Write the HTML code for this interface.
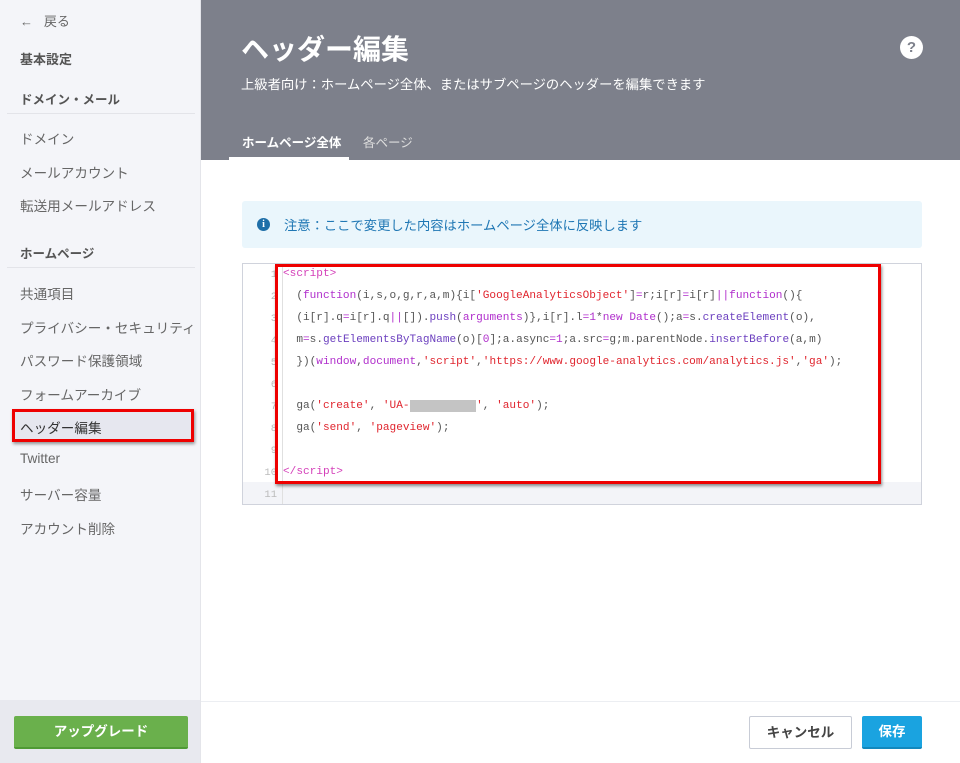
<!DOCTYPE html>
<html><head><meta charset="utf-8"><style>
*{margin:0;padding:0;box-sizing:border-box}
body{width:960px;height:763px;position:relative;overflow:hidden;font-family:"Liberation Sans","Noto Sans CJK JP",sans-serif;background:#fff}
.sb{position:absolute;left:0;top:0;width:201px;height:763px;background:#f4f5f9;border-right:1px solid #e4e5ea}
.sb div{position:absolute;left:20px;color:#666;font-size:13.6px;white-space:nowrap}
.sb .b{font-weight:bold;color:#555;font-size:12.5px}
.sb .hr{position:absolute;left:7px;width:188px;height:1px;background:#e3e4e9}
.hd{position:absolute;left:201px;top:0;width:759px;height:160px;background:#7d808b;color:#fff}
.code{position:absolute;left:242px;top:263px;width:680px;height:242px;border:1px solid #d0d3dc;background:#fff;font-family:"Liberation Mono",monospace;font-size:11.1px}
.ln{position:absolute;left:0;width:34px;text-align:right;color:#bbb;font-size:10.5px}
.cl{position:absolute;left:40px;white-space:pre;color:#555}
.k{color:#b02ecc}.s{color:#e0252e}.f{color:#6b3fbf}.t{color:#d43fb9}
</style></head><body>
<div class="sb">
<div style="top:11px;font-size:13px">←&nbsp;&nbsp;&nbsp;戻る</div>
<div class="b" style="top:49px;font-size:13px">基本設定</div>
<div class="b" style="top:89px">ドメイン・メール</div>
<span class="hr" style="top:113px"></span>
<div style="top:128px">ドメイン</div>
<div style="top:162px">メールアカウント</div>
<div style="top:195px">転送用メールアドレス</div>
<div class="b" style="top:243px">ホームページ</div>
<span class="hr" style="top:267px"></span>
<div style="top:283px">共通項目</div>
<div style="top:317px">プライバシー・セキュリティ</div>
<div style="top:350px">パスワード保護領域</div>
<div style="top:384px">フォームアーカイブ</div>
<span style="position:absolute;left:12px;top:409px;width:182px;height:33px;border:3px solid #e00;background:#e6e7ef;box-shadow:1px 2px 3px rgba(0,0,0,.4)"></span>
<div style="top:417px;color:#333">ヘッダー編集</div>
<div style="top:451px">Twitter</div>
<div style="top:484px">サーバー容量</div>
<div style="top:518px">アカウント削除</div>
<span style="position:absolute;left:0;top:700px;width:200px;height:63px;background:#e8e9ef"></span>
<span style="position:absolute;left:14px;top:716px;width:174px;height:33px;background:#6ab04c;border-bottom:2px solid #4f9a35;border-radius:2px;color:#fff;font-weight:bold;font-size:13.5px;text-align:center;line-height:32px">アップグレード</span>
</div>
<div class="hd">
<div style="position:absolute;left:40px;top:28px;font-size:28px;font-weight:bold">ヘッダー編集</div>
<div style="position:absolute;left:40px;top:74px;font-size:13.3px">上級者向け：ホームページ全体、またはサブページのヘッダーを編集できます</div>
<div style="position:absolute;left:699px;top:36px;width:23px;height:23px;border-radius:50%;background:#fff;color:#7d808b;font-weight:bold;font-size:15px;text-align:center;line-height:23px">?</div>
<div style="position:absolute;left:41px;top:132px;font-size:12.5px;font-weight:bold">ホームページ全体</div>
<div style="position:absolute;left:162px;top:132px;font-size:12.5px;color:#ddd">各ページ</div>
<span style="position:absolute;left:28px;top:157px;width:120px;height:3px;background:#fff"></span>
</div>
<div style="position:absolute;left:242px;top:201px;width:680px;height:47px;background:#eaf6fc;border-radius:3px">
<span style="position:absolute;left:15px;top:17px;width:13px;height:13px;border-radius:50%;background:#1f6fa8;color:#fff;font-size:10px;font-weight:bold;text-align:center;line-height:13px;font-family:'Liberation Serif',serif">i</span>
<span style="position:absolute;left:42px;top:14px;font-size:13.3px;color:#1f77b4">注意：ここで変更した内容はホームページ全体に反映します</span>
</div>
<div class="code">
<span style="position:absolute;left:0;top:218px;width:678px;height:22px;background:#f3f4f8"></span>
<span style="position:absolute;left:39px;top:0;width:1px;height:240px;background:#e0e0e0"></span>
<div class="ln" style="top:5px">1</div><div class="ln" style="top:27px">2</div><div class="ln" style="top:49px">3</div><div class="ln" style="top:71px">4</div><div class="ln" style="top:93px">5</div><div class="ln" style="top:115px">6</div><div class="ln" style="top:137px">7</div><div class="ln" style="top:159px">8</div><div class="ln" style="top:181px">9</div><div class="ln" style="top:203px">10</div><div class="ln" style="top:225px">11</div>
<div class="cl t" style="top:4px">&lt;script&gt;</div>
<div class="cl" style="top:26px">  (<span class="k">function</span>(i,s,o,g,r,a,m){i[<span class="s">'GoogleAnalyticsObject'</span>]<span class="k">=</span>r;i[r]<span class="k">=</span>i[r]<span class="k">||</span><span class="k">function</span>(){</div>
<div class="cl" style="top:48px">  (i[r].q<span class="k">=</span>i[r].q<span class="k">||</span>[]).<span class="f">push</span>(<span class="k">arguments</span>)},i[r].l<span class="k">=</span><span class="k">1</span>*<span class="k">new</span> <span class="k">Date</span>();a<span class="k">=</span>s.<span class="f">createElement</span>(o),</div>
<div class="cl" style="top:70px">  m<span class="k">=</span>s.<span class="f">getElementsByTagName</span>(o)[<span class="k">0</span>];a.async<span class="k">=</span><span class="k">1</span>;a.src<span class="k">=</span>g;m.parentNode.<span class="f">insertBefore</span>(a,m)</div>
<div class="cl" style="top:92px">  })(<span class="k">window</span>,<span class="k">document</span>,<span class="s">'script'</span>,<span class="s">'https://www.google-analytics.com/analytics.js'</span>,<span class="s">'ga'</span>);</div>
<div class="cl" style="top:136px">  ga(<span class="s">'create'</span>, <span class="s">'UA-<span style="background:#c4c4c4;color:transparent">xxxxxxxxxx</span>'</span>, <span class="s">'auto'</span>);</div>
<div class="cl" style="top:158px">  ga(<span class="s">'send'</span>, <span class="s">'pageview'</span>);</div>
<div class="cl t" style="top:202px">&lt;/script&gt;</div>
</div>
<span style="position:absolute;left:275px;top:264px;width:606px;height:220px;border:3px solid #e00;box-shadow:1px 2px 3px rgba(0,0,0,.45)"></span>
<span style="position:absolute;left:201px;top:701px;width:759px;height:1px;background:#eceef2"></span>
<span style="position:absolute;left:749px;top:716px;width:103px;height:33px;border:1px solid #c8ccd6;border-radius:2px;color:#444;font-size:13.5px;font-weight:bold;text-align:center;line-height:31px">キャンセル</span>
<span style="position:absolute;left:862px;top:716px;width:60px;height:33px;background:#1aa3e0;border-bottom:2px solid #1288bd;border-radius:2px;color:#fff;font-size:13.5px;font-weight:bold;text-align:center;line-height:32px">保存</span>
</body></html>
